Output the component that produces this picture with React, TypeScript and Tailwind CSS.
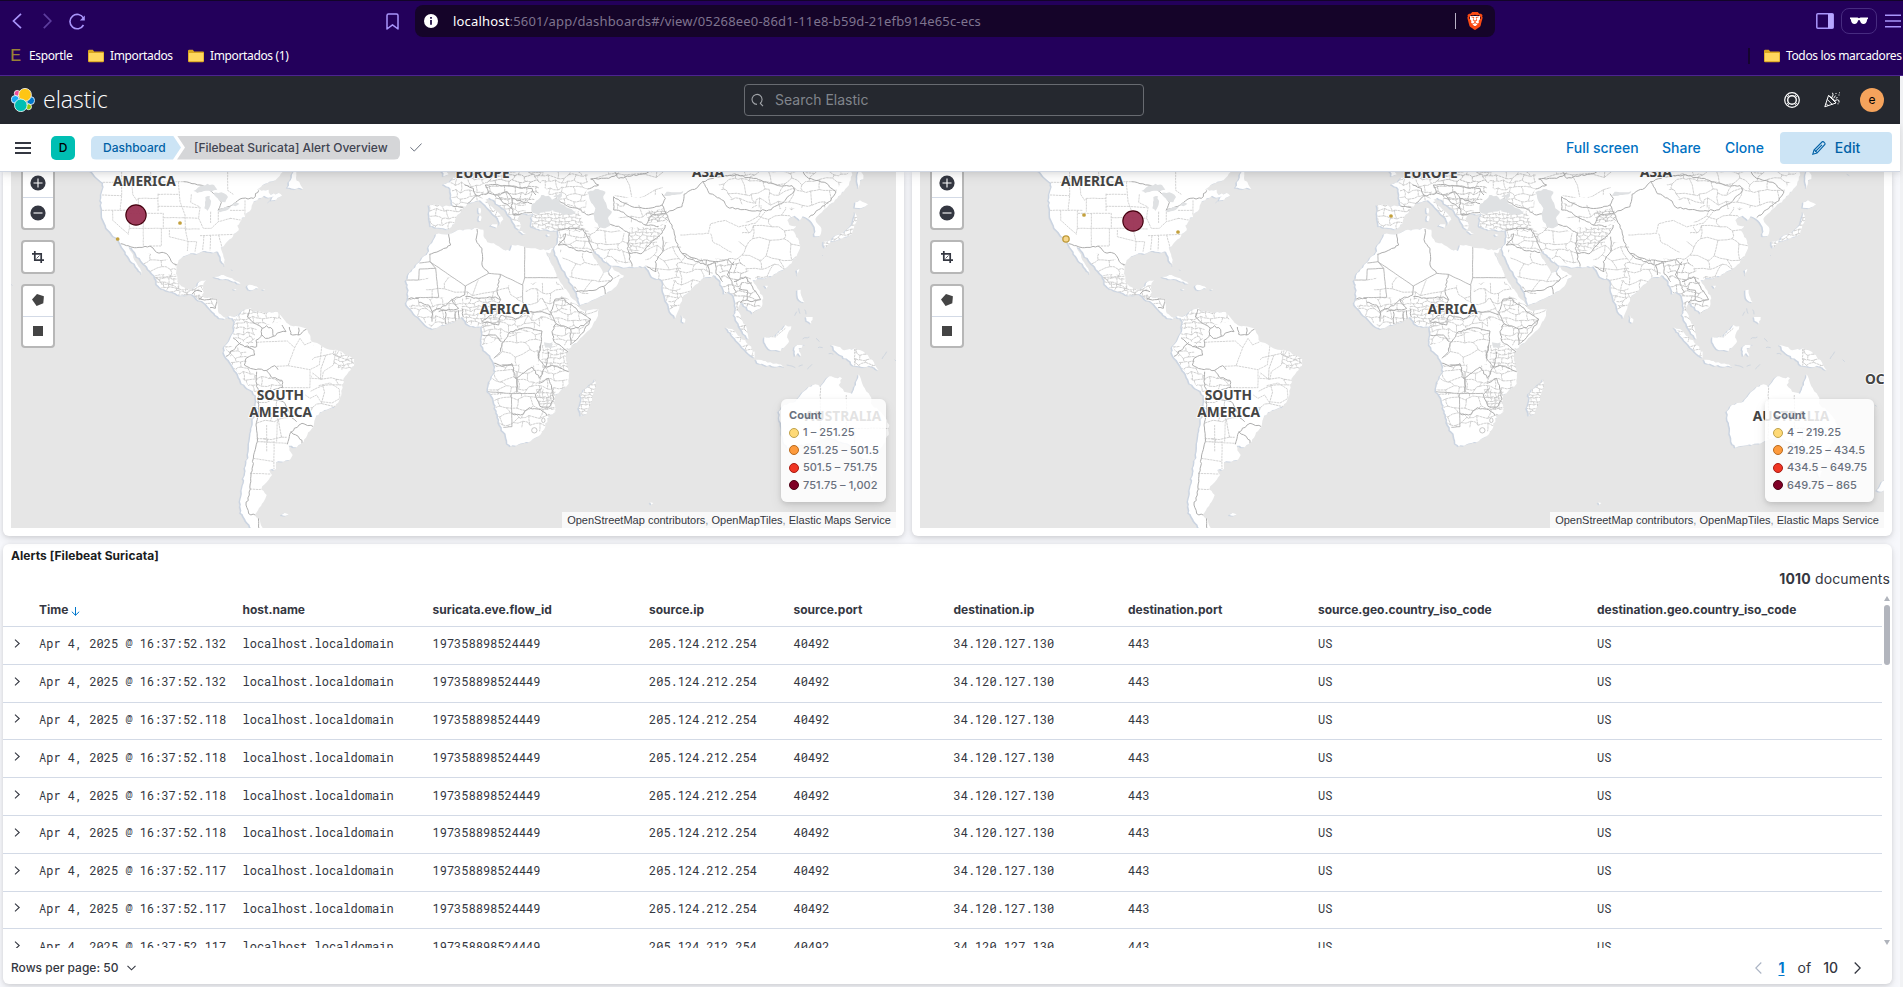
import React from "react";
import { SiBrave } from "react-icons/si";

type Pt = [number, number];

const pts = (s: string): Pt[] => s.trim().split(/\s+/).map((p) => p.split(",").map(Number) as Pt);

function rng(seed: number) {
  let a = seed;
  return () => {
    a = (a + 0x6d2b79f5) | 0;
    let t = Math.imul(a ^ (a >>> 15), 1 | a);
    t = (t + Math.imul(t ^ (t >>> 7), 61 | t)) ^ t;
    return ((t ^ (t >>> 14)) >>> 0) / 4294967296;
  };
}

/* Breaks a polyline into short wobbly steps so that it reads as a natural coast or border. */
function rough(s: string, amp: number, closed: boolean): string {
  const p = pts(s);
  const r = rng(p.length * 131 + Math.abs(Math.round(p[0][0] * 7 + p[0][1])));
  const out: string[] = [];
  const n = closed ? p.length : p.length - 1;
  for (let i = 0; i < n; i++) {
    const [x1, y1] = p[i];
    const [x2, y2] = p[(i + 1) % p.length];
    const len = Math.hypot(x2 - x1, y2 - y1);
    const k = Math.max(1, Math.round(len / 8));
    for (let j = 0; j < k; j++) {
      const w = j === 0 ? 0 : amp;
      const t = j / k;
      out.push(`${(x1 + (x2 - x1) * t + (r() - 0.5) * 2 * w).toFixed(1)},${(y1 + (y2 - y1) * t + (r() - 0.5) * 2 * w).toFixed(1)}`);
    }
  }
  if (!closed) out.push(p[p.length - 1].join(","));
  return "M" + out.join("L") + (closed ? "Z" : "");
}

/* Irregular honeycomb of small districts that covers the bounding box of an area. */
function mesh(area: string, size: number): string {
  const p = pts(area);
  const xs = p.map((q) => q[0]);
  const ys = p.map((q) => q[1]);
  const x0 = Math.min(...xs) - size;
  const y0 = Math.min(...ys) - size;
  const cols = Math.ceil((Math.max(...xs) - x0) / size) + 2;
  const rows = Math.ceil((Math.max(...ys) - y0) / size) + 2;
  const r = rng(cols * 97 + rows * 31 + size);
  const v: Pt[][] = [];
  for (let j = 0; j < rows; j++) {
    v.push([]);
    for (let i = 0; i < cols; i++) v[j].push([x0 + i * size + (r() - 0.5) * size * 0.8, y0 + j * size + (r() - 0.5) * size * 0.8]);
  }
  let d = "";
  const edge = (a: Pt, b: Pt) => {
    const mx = (a[0] + b[0]) / 2 + (r() - 0.5) * size * 0.35;
    const my = (a[1] + b[1]) / 2 + (r() - 0.5) * size * 0.35;
    d += `M${a[0].toFixed(1)},${a[1].toFixed(1)}L${mx.toFixed(1)},${my.toFixed(1)}L${b[0].toFixed(1)},${b[1].toFixed(1)}`;
  };
  for (let j = 0; j < rows; j++)
    for (let i = 0; i < cols; i++) {
      if (i + 1 < cols) edge(v[j][i], v[j][i + 1]);
      if (j + 1 < rows && (i + j) % 2 === 0) edge(v[j][i], v[j + 1][i]);
    }
  return d;
}

const WEST_LAND = [
  "266,14 290,38 310,54 311,66 306,82 304,100 303,120 306,148 313,172 326,196 340,214 354,222 362,238 372,254 384,274 392,288 404,296 414,312 426,328 420,310 408,292 400,278 394,262 386,246 396,250 408,268 424,288 436,300 448,316 464,332 470,346 470,358 486,372 510,380 534,390 556,392 576,388 590,402 606,408 620,420 632,434 646,450 658,460 674,462 686,456 698,460 704,470 716,448 702,456 690,452 676,458 662,448 654,438 650,402 634,398 612,398 606,390 612,378 610,358 618,346 598,350 592,364 578,372 560,372 544,364 532,350 528,326 530,300 536,286 550,274 572,265 596,265 616,258 640,263 654,260 662,276 668,294 676,304 674,284 666,260 662,248 676,236 698,216 716,196 712,182 724,166 736,148 754,132 758,116 776,100 792,92 806,98 822,92 806,112 846,92 836,84 812,90 806,74 790,76 770,74 788,60 808,50 832,40 856,14",
  "862,68 872,46 880,22 892,16 888,40 900,56 910,72 896,68 884,72",
  "705,470 720,446 736,432 752,430 758,442 776,438 800,444 832,440 846,456 860,474 880,484 906,487 922,494 930,510 936,530 958,538 976,550 1000,555 1026,560 1048,574 1063,582 1062,602 1046,620 1030,642 1028,668 1020,700 1006,726 980,734 960,742 946,760 940,786 922,810 906,836 890,847 866,842 868,856 878,870 870,884 850,890 828,892 828,912 808,915 816,930 800,952 784,972 800,990 790,1012 774,1036 764,1050 776,1060 782,1078 796,1094 758,1094 738,1068 722,1044 720,1010 728,962 738,902 746,860 750,820 758,780 765,732 768,692 750,674 725,656 710,622 690,592 674,570 672,548 690,522 702,500",
  "642,336 664,330 690,338 708,348 722,356 700,350 676,342 656,340",
  "742,362 756,360 776,370 760,374 746,374",
  "700,372 710,372 706,375",
  "788,373 796,373 792,375",
  "844,1050 854,1044 866,1048 852,1052",
];

const EAST_LAND = [
  "12,208 30,208 54,206 76,196 106,193 136,190 154,194 158,220 166,232 192,240 214,254 234,258 240,240 258,240 280,248 310,250 340,256 364,250 350,266 356,290 370,320 382,346 396,370 412,386 422,402 436,416 442,430 460,438 500,433 498,452 480,486 450,516 426,536 410,552 402,576 406,600 412,622 410,656 396,670 370,688 368,720 370,740 346,760 340,786 320,814 290,832 260,838 236,844 226,836 222,814 204,780 194,744 184,700 168,680 172,650 190,620 185,592 175,572 155,556 148,540 151,510 150,482 130,486 110,480 90,456 70,470 44,478 2,492 -20,480 -38,460 -58,440 -76,420 -72,400 -70,376 -78,346 -62,320 -48,300 -33,286 -13,264 -7,240 4,226",
  "-9,120 12,120 36,124 62,122 58,90 56,72 34,58 54,52 64,38 76,34 90,12 1262,12 1256,46 1240,72 1216,100 1186,126 1164,146 1150,162 1168,190 1164,212 1148,214 1148,186 1134,166 1112,154 1104,166 1088,152 1066,166 1072,180 1094,184 1080,196 1098,220 1104,250 1090,280 1060,310 1020,334 986,340 962,346 976,370 994,400 990,424 962,446 944,426 926,414 918,430 926,460 944,490 950,522 934,506 920,476 906,450 912,430 904,390 888,380 876,386 866,350 850,332 830,336 810,342 790,360 770,382 750,400 742,430 730,460 714,440 700,400 692,366 690,346 660,336 640,304 600,306 574,308 540,302 514,286 490,258 480,262 486,280 500,300 514,324 530,322 540,300 546,316 560,322 576,332 560,350 546,370 520,388 480,406 444,420 440,400 430,376 406,336 386,300 370,270 366,252 376,238 380,214 378,196 350,196 320,192 300,186 298,158 306,148 282,146 262,150 256,162 266,176 262,194 250,186 240,164 224,140 200,120 184,104 172,98 164,110 184,130 204,148 214,164 204,180 198,160 178,140 160,120 144,106 124,112 106,116 94,130 76,150 68,176 50,192 20,188 -4,184 -8,160",
  "490,642 492,664 480,700 464,746 446,752 440,730 448,706 446,686 470,664",
  "750,450 760,462 757,474 750,470",
  "1270,112 1284,106 1308,118 1286,130 1268,128",
  "1270,140 1275,160 1266,190 1260,208 1240,215 1214,226 1196,228 1210,212 1236,204 1250,190 1264,166",
  "1175,230 1196,226 1190,238 1178,248",
  "1282,12 1290,24 1294,42 1284,46 1280,70 1276,40",
  "1094,316 1102,312 1098,332",
  "998,362 1008,362 1004,370",
  "1096,376 1106,374 1108,392 1118,412 1108,410 1098,400",
  "1122,456 1142,456 1138,476 1124,468",
  "882,487 900,492 926,516 950,540 968,560 968,578 950,566 926,540 904,516",
  "972,584 1000,588 1040,598 1060,606 1020,604 976,594",
  "998,516 1030,515 1060,480 1078,484 1066,510 1071,530 1046,558 1010,552 1000,536",
  "1088,546 1096,540 1122,538 1100,550 1108,574 1098,564 1090,574",
  "1198,540 1224,546 1236,556 1268,550 1300,564 1322,586 1340,616 1310,602 1290,606 1264,602 1250,586 1224,570 1212,560",
  "1040,740 1056,720 1090,710 1106,690 1130,666 1150,658 1164,666 1180,646 1192,634 1230,640 1220,660 1236,680 1260,686 1272,660 1280,628 1294,664 1314,692 1320,720 1346,740 1372,780 1370,810 1346,850 1326,886 1290,880 1266,850 1254,840 1226,830 1190,816 1140,836 1090,842 1066,848 1054,830 1050,790",
  "1308,918 1326,918 1320,938",
  "1490,976 1506,950 1520,940 1520,970 1504,980",
  "140,128 146,130 145,146 140,144",
  "176,182 196,178 194,188",
  "142,152 147,152 146,168 141,168",
  "262,198 282,204 274,208",
  "344,208 356,210 348,214",
  "30,20 44,14 50,28 34,34",
  "655,1012 664,1014 658,1019",
];

const EAST_SPECKS = [
  "1100,430 1104,446", "1118,434 1122,448", "1094,440 1088,452", "1064,600 1090,608", "1100,604 1112,600", "1126,612 1140,598", "1152,520 1162,530",
  "1190,566 1204,568", "1158,548 1172,548", "1112,522 1132,516", "1170,270 1172,272", "1350,582 1364,560", "1388,584 1394,590", "1484,720 1490,724", "1400,28 1408,32",
];

const WEST_WATER = [
  "580,78 600,64 622,56 642,60 652,74 634,80 612,78 592,84",
  "616,96 630,94 632,118 622,138 613,130",
  "640,84 664,82 684,96 676,112 658,108 648,96",
  "652,138 676,126 694,124 684,134 660,142",
  "692,122 708,112 718,116 706,124",
];
const EAST_WATER = [
  "300,116 318,104 328,90 350,92 360,104 384,98 382,110 410,130 432,140 416,150 390,148 362,136 340,140 320,148 300,142",
  "364,96 390,84 386,98",
  "466,82 490,72 520,80 514,100 526,130 540,140 528,160 534,182 520,190 500,186 490,170 484,146 490,130 474,106",
  "696,92 704,80 740,82 754,78 752,84 720,90",
  "336,532 362,532 362,548 340,548",
  "342,262 350,264 374,318 368,316",
];

const WEST_BORDERS = [
  "550,50 576,56 600,60 626,70 650,92 664,112 654,136 690,124 720,102 760,100 776,76", "362,236 410,248 450,243 470,262 486,262 500,266 514,290 533,300",
  "576,388 590,376 606,380", "606,398 596,402 620,404 650,402 646,430 630,428", "750,432 742,456 770,478 786,490 783,514 768,526 770,545 734,545 700,520",
  "786,490 800,482 818,494 820,514 796,520 786,510", "820,514 840,502 858,500 846,480", "868,486 872,508 896,510 920,492", "896,488 896,510",
  "722,532 700,556 678,574", "734,545 762,556 764,570 738,580 733,600 760,612 800,616 824,602 834,614", "770,620 768,650 776,690", "800,616 812,634 846,646 848,668 820,674",
  "776,690 776,750 768,780 772,830 760,880 752,940 748,990 738,1020 746,1046 776,1052 778,1092", "862,838 872,802 906,775 940,785", "872,800 906,826 906,836", "776,690 800,700 850,710 872,750 890,770",
];
const WEST_STRAIGHT = [
  "308,52 550,50", "306,90 365,92", "305,136 405,136", "338,136 338,166 386,208", "388,136 388,190 384,208", "388,190 560,190", "365,20 365,92 360,136", "474,86 474,140", "415,100 474,100",
  "415,100 415,140", "390,145 490,145 490,190", "430,145 430,243", "484,190 484,243 450,243", "508,195 508,215 560,228", "474,88 536,88", "474,124 540,124", "490,158 548,158", "535,50 540,110 555,150 556,192 564,232 562,258",
  "556,192 600,192", "562,230 590,230 585,260", "612,212 608,256", "632,210 630,256", "656,210 666,248", "600,212 700,208", "574,88 572,112 600,126 596,160 610,190 634,190 655,170 692,160", "632,140 632,175",
  "655,140 655,170", "690,136 735,136", "690,160 722,165", "735,106 735,152", "452,20 452,50", "683,20 683,76 700,88", "396,52 398,88 410,106 415,100", "540,124 596,128", "548,158 596,160", "770,532 800,530 862,528 884,548 864,602 830,604",
  "864,602 930,614 930,668 848,668", "884,548 900,520 914,540 936,530", "966,542 958,600 930,614", "1008,556 1000,600 970,620 966,642 932,640", "750,925 812,927", "750,972 790,974", "822,828 822,912", "772,830 860,835", "760,880 822,890",
  "956,662 990,654 1018,672 1020,700 996,714 962,710 950,690 930,700 916,690", "800,780 800,860", "832,760 830,830",
];
const EAST_BORDERS = [
  "50,207 56,240 30,254 -8,268", "135,192 132,224 150,250 150,300 170,325", "205,328 195,380 206,404", "272,410 290,440 250,462 206,452 200,480 150,470", "100,363 98,390 60,404 26,430 0,440", "90,430 94,456", "100,395 140,400 190,396 206,404 180,450 150,470",
  "235,500 280,488 330,498 326,540 320,580 340,606 322,640 300,606 250,640 240,596 210,604 185,594", "255,640 255,680", "235,500 210,536 206,560 186,580", "320,655 350,640 366,700 350,726 324,724 310,688 330,668", "240,746 266,750 292,728 326,734 345,752",
  "370,402 390,400 420,420 442,442 476,462 456,482 416,492 372,476 356,440 370,402", "372,476 360,500 366,530 408,560", "416,492 416,540", "476,462 456,500 420,536", "340,606 360,600 410,620", "350,560 340,606", "290,440 330,440 356,450", "320,580 326,540",
  "150,510 190,510 206,530", "375,196 426,190 452,192 466,216 476,240 486,262", "378,240 400,238 432,256 480,262", "400,205 396,224 378,240", "432,380 486,376 516,364 542,340 530,322", "516,366 520,388", "530,176 560,184 592,205 586,250 600,305",
  "545,135 560,136 600,160 640,180 680,184", "590,265 630,265 660,230 690,205 700,180", "545,135 545,95 600,125 650,130 690,120 702,145 720,180 732,230 750,265 800,285 850,290 890,285 906,300", "700,145 750,125 756,88 796,68 812,50 832,86 876,108 886,126 960,138 1010,135 1050,116 1088,76 1080,62 1040,62 980,44 910,30 850,36 812,50",
  "1110,16 1130,40 1182,54 1212,80 1196,108 1170,124 1130,158", "700,145 660,150 640,180", "750,265 766,280 822,300 824,285", "850,290 826,300 832,330", "850,292 852,326 872,350", "906,290 886,330 900,350 912,384", "906,350 940,336 962,366 986,404 960,410 945,405 925,412", "920,370 946,376 945,405",
  "692,215 692,260 670,290 672,320 646,306", "545,16 560,40 660,20", "690,86 700,100 690,120", "466,72 500,60 476,42 530,40 560,24", "448,140 470,150 488,146", "370,100 400,120 450,136", "60,122 96,130", "98,60 124,70 132,92 106,116", "132,92 170,84 196,90 226,80 240,100 270,110 300,116", "196,90 210,110 240,130 244,150 270,146",
  "170,84 160,60 200,60 240,64 300,70 312,90", "240,100 240,130", "245,150 300,142", "60,404 80,430 20,440", "-40,412 -10,420 0,440 0,470", "40,440 42,478", "70,440 72,468", "80,436 82,462", "-76,400 -40,400",
];
const EAST_STRAIGHT = [
  "278,245 278,338 380,338", "278,338 272,358 272,410", "170,325 205,328 272,360", "-6,290 100,363 170,325", "-6,290 -6,268", "11,310 20,397 -50,398", "11,310 -6,290 -38,294", "-80,345 -40,345 -38,312 11,310", "168,680 238,686 310,685", "238,686 240,785 214,787", "210,600 240,600", "255,620 255,680",
];
const EAST_THIN = ["1165,660 1165,780", "1243,690 1243,790 1372,790", "1268,552 1268,602", "1165,780 1165,826", "1268,790 1268,850", "745,210 830,205 836,176 880,166 920,186 972,174 1000,140", "1000,515 1030,516 1060,490", "836,206 842,230 900,262"];

type Area = { a: string; s: number; dark?: boolean };
const WEST_MESH: Area[] = [
  { a: "400,262 470,266 530,300 530,340 620,350 650,440 590,410 470,350", s: 26 },
  { a: "466,330 530,330 540,380 600,370 600,400 500,384 466,360", s: 12 },
  { a: "705,430 860,438 840,470 790,480 770,480 760,540 700,520 700,480", s: 15 },
  { a: "676,540 740,550 740,600 776,640 770,690 700,610", s: 17 },
  { a: "770,620 846,640 846,670 776,690", s: 22 },
  { a: "768,700 850,710 870,770 860,830 770,830", s: 36 },
  { a: "1000,556 1066,575 1060,610 1030,620 1000,600", s: 14 },
  { a: "940,540 1070,560 1030,720 930,740", s: 44 },
];
const EAST_MESH: Area[] = [
  { a: "-10,116 100,126 60,194 -10,190", s: 20 },
  { a: "55,20 160,20 150,110 60,126", s: 19 },
  { a: "160,16 330,16 320,90 300,110 240,120 160,90", s: 17, dark: true },
  { a: "300,16 470,16 460,140 360,100", s: 18 },
  { a: "160,100 290,100 260,200 160,140", s: 17 },
  { a: "300,144 440,138 460,200 380,196 300,190", s: 10 },
  { a: "380,196 470,196 486,262 380,240", s: 19 },
  { a: "450,190 540,180 600,220 590,306 500,280", s: 26 },
  { a: "380,250 500,270 570,330 440,400", s: 42 },
  { a: "592,190 700,180 670,240 590,264", s: 11 },
  { a: "640,140 700,130 710,170 650,175", s: 9, dark: true },
  { a: "640,220 750,240 740,460 640,330", s: 30 },
  { a: "740,270 860,290 830,350 700,450", s: 27 },
  { a: "850,280 930,280 960,350 990,430 940,520 880,390", s: 20, dark: true },
  { a: "960,120 1100,130 1110,300 980,350 900,280 940,180", s: 38 },
  { a: "840,20 1250,20 1180,130 960,130 880,100", s: 30 },
  { a: "470,16 700,16 690,90 560,100", s: 62 },
  { a: "550,110 690,125 640,180 560,160", s: 40 },
  { a: "-80,400 0,400 90,400 90,480 0,490 -60,440", s: 19 },
  { a: "90,400 200,400 200,470 150,490 90,470", s: 12 },
  { a: "200,440 340,440 320,490 150,540 150,480", s: 19 },
  { a: "280,356 380,350 420,420 360,480 290,440", s: 28 },
  { a: "-40,340 110,340 270,370 270,410 0,400", s: 44 },
  { a: "370,400 500,430 420,540 360,540", s: 21 },
  { a: "330,540 412,550 410,620 330,610", s: 13 },
  { a: "206,500 330,500 320,600 190,600", s: 32 },
  { a: "170,600 330,600 410,620 400,680 170,690", s: 22 },
  { a: "180,690 370,680 370,740 340,800 200,780", s: 24 },
  { a: "310,670 370,680 370,740 320,726", s: 12 },
  { a: "440,640 500,640 480,760 430,760", s: 10 },
  { a: "1268,550 1340,560 1340,610 1268,602", s: 16 },
  { a: "1170,140 1280,130 1270,230 1170,250", s: 13 },
  { a: "880,480 970,550 960,580", s: 20 },
];

function Hemisphere({ id, land, water, borders, straight, thin, areas, specks }: { id: string; land: string[]; water: string[]; borders: string[]; straight: string[]; thin: string[]; areas: Area[]; specks: string[] }) {
  const landPath = land.map((l) => rough(l, 2.6, true)).join("");
  const straightPath = straight.map((l) => rough(l, 0.4, false)).join("");
  return (
    <g>
      <defs>
        <clipPath id={`${id}-land`}><path d={landPath} /></clipPath>
        {areas.map((m, i) => (
          <clipPath key={i} id={`${id}-a${i}`}><path d={rough(m.a, 3, true)} /></clipPath>
        ))}
      </defs>
      <path d={landPath} fill="#cbd4e1" transform="translate(-4 2)" stroke="#cbd4e1" strokeWidth="1" />
      <path d={landPath} fill="#ffffff" />
      <path d={specks.map((l) => rough(l, 2, false)).join("")} fill="none" stroke="#cfd6df" strokeWidth="3" />
      <g clipPath={`url(#${id}-land)`} fill="none">
        {areas.map((m, i) => (
          <g key={i} clipPath={`url(#${id}-a${i})`}>
            <path d={mesh(m.a, m.s)} stroke={m.dark ? "#b8b8b8" : "#c3c3c3"} strokeWidth={m.dark ? 2.5 : 2.3} strokeDasharray="8 1.5" />
          </g>
        ))}
        <path d={thin.map((l) => rough(l, 1, false)).join("")} stroke="#c6c6c6" strokeWidth="2.4" strokeDasharray="7 2" />
        <path d={straightPath} stroke={id.startsWith("w") ? "#cdcdcd" : "#b0b0b0"} strokeWidth="2.6" strokeDasharray={id.startsWith("w") ? "7 2" : undefined} />
        <path d={borders.map((l) => rough(l, 2.4, false)).join("")} stroke="#adadad" strokeWidth="3" />
        <path d={water.map((l) => rough(l, 2.4, true)).join("")} fill="#dfe1e3" />
      </g>
    </g>
  );
}

const LABELS: { t: string; x: number; y: number; start?: boolean }[] = [
  { t: "AMERICA", x: 433, y: 64 },
  { t: "SOUTH", x: 841, y: 705 },
  { t: "AMERICA", x: 842, y: 756 },
  { t: "EUROPE", x: 1448, y: 38 },
  { t: "ASIA", x: 2124, y: 37 },
  { t: "AFRICA", x: 1514, y: 447 },
  { t: "AUSTRALIA", x: 2529, y: 768 },
  { t: "OCEANIA", x: 2751, y: 657, start: true },
];

type Dot = { x: number; y: number; kind: "big" | "mid" | "small" };

function WorldMap({ id, left, width, dots, oceania }: { id: string; left: number; width: number; dots: Dot[]; oceania: boolean }) {
  return (
    <svg className="block h-full w-full bg-[#e6e6e6]" viewBox={`${left} 21 ${width} 1068`} preserveAspectRatio="none">
      <Hemisphere id={`w${id}`} land={WEST_LAND} water={WEST_WATER} borders={WEST_BORDERS} straight={WEST_STRAIGHT} thin={[]} areas={WEST_MESH} specks={["34,358 37,362", "694,314 697,318"]} />
      <g transform="translate(1296 0)">
        <Hemisphere id={`e${id}`} land={EAST_LAND} water={EAST_WATER} borders={EAST_BORDERS} straight={EAST_STRAIGHT} thin={EAST_THIN} areas={EAST_MESH} specks={EAST_SPECKS} />
        <circle cx="307" cy="796" r="8" fill="none" stroke="#b9b9b9" strokeWidth="2.4" />
        <ellipse cx="334" cy="766" rx="5" ry="7" fill="none" stroke="#b9b9b9" strokeWidth="2.4" />
      </g>
      {LABELS.filter((l) => oceania || !l.start).map((l) => (
        <text key={l.t + l.y} x={l.x} y={l.y} textAnchor={l.start ? "start" : "middle"} fontFamily='"Noto Sans", sans-serif' fontWeight="700" fontSize="41.2" fill="#444" stroke="#fff" strokeOpacity="0.85" strokeWidth="6" strokeLinejoin="round" paintOrder="stroke">
          {l.t}
        </text>
      ))}
      {dots.map((d, i) =>
        d.kind === "big" ? (
          <circle key={i} cx={d.x} cy={d.y} r="30.5" fill="#9a3253" fillOpacity="0.95" stroke="#45000f" strokeWidth="3.4" />
        ) : d.kind === "mid" ? (
          <circle key={i} cx={d.x} cy={d.y} r="9.5" fill="#f7d78c" stroke="#be9a3a" strokeWidth="4" />
        ) : (
          <circle key={i} cx={d.x} cy={d.y} r="5.6" fill="#c3a03c" />
        ),
      )}
    </svg>
  );
}

function MapControls() {
  const box = "w-[34px] rounded-[4px] border-2 border-[#b7b7b7] bg-white bg-clip-padding";
  return (
    <div className="absolute -top-[8px] left-[10px] flex flex-col">
      <div className={`${box} h-[66px]`}>
        <div className="flex h-[32px] items-end justify-center border-b border-[#d3dae6] pb-[6px]">
          <svg width="16" height="16" viewBox="0 0 16 16"><circle cx="8" cy="8" r="7.6" fill="#343741" /><path d="M8 3.5v9M3.5 8h9" stroke="#fff" strokeWidth="1.1" /></svg>
        </div>
        <div className="flex h-[30px] items-center justify-center">
          <svg width="16" height="16" viewBox="0 0 16 16"><circle cx="8" cy="8" r="7.6" fill="#343741" /><path d="M3.5 8h9" stroke="#fff" strokeWidth="1.1" /></svg>
        </div>
      </div>
      <div className={`${box} mt-[10px] flex h-[34px] items-center justify-center`}>
        <svg width="12" height="12" viewBox="0 0 12 12" fill="none" stroke="#343741" strokeWidth="1.7"><path d="M2.8 0v9.2H12M0 2.8h9.2V12" /><path d="M4.5 7.5l3-3" strokeWidth=".8" /></svg>
      </div>
      <div className={`${box} mt-[10px] h-[64px]`}>
        <div className="flex h-[31px] items-center justify-center border-b border-[#d3dae6] pb-[2px]">
          <svg width="12" height="12" viewBox="0 0 12 12"><path d="M5 0l6.9 2.200-.6 7L4.600 12 0 5.600z" fill="#444" /></svg>
        </div>
        <div className="flex h-[28px] items-center justify-center pb-[1px]"><div className="size-[10px] bg-[#444]" /></div>
      </div>
    </div>
  );
}

function Legend({ rows, wide }: { rows: string[]; wide: boolean }) {
  const fills = ["bg-[#fed976] border-[#bfa24b]", "bg-[#fd9a3c] border-[#b96a1c]", "bg-[#f03523] border-[#a81a12]", "bg-[#800026] border-[#4c0014]"];
  return (
    <div className={`absolute right-[10px] bottom-[26px] h-[103px] rounded-[6px] bg-white/85 pt-[8px] pl-[8px] font-["Inter",sans-serif] text-[#69707d] shadow-[0_2px_5px_rgba(0,0,0,0.12),0_6px_14px_rgba(0,0,0,0.07)] ${wide ? "w-[109px]" : "w-[105px]"}`}>
      <div className="h-[17px] text-[11px] leading-[17px] font-bold">Count</div>
      {rows.map((r, i) => (
        <div key={r} className="flex h-[17.500px] items-center gap-[4px]">
          <span className={`size-[10px] rounded-full border ${fills[i]}`} />
          <span className="text-[11px] leading-[17px] font-medium tracking-[0.07px] whitespace-nowrap">{r}</span>
        </div>
      ))}
    </div>
  );
}

function MapPanel({ id, wide, left, dots, rows }: { id: string; wide: boolean; left: number; dots: Dot[]; rows: string[] }) {
  return (
    <section className={`h-[364px] rounded-b-[6px] bg-white px-[8px] pb-[8px] shadow-[0_1px_4px_rgba(0,0,0,0.10),0_4px_10px_rgba(0,0,0,0.09)] ${wide ? "w-[980px]" : "w-[901px]"}`}>
      <div className="relative h-full overflow-hidden">
        <WorldMap id={id} left={left} width={wide ? 2892 : 2655} dots={dots} oceania={wide} />
        <MapControls />
        <Legend rows={rows} wide={wide} />
        <div className='absolute right-0 bottom-0 flex h-[16px] w-[334px] items-center justify-center bg-white/75 font-["Liberation_Sans",Arial,sans-serif] text-[11px] leading-[16px] whitespace-pre text-[#343741]'>
          OpenStreetMap contributors<span className="text-[#8a8f98]">, </span>OpenMapTiles<span className="text-[#8a8f98]">, </span>Elastic Maps Service
        </div>
      </div>
    </section>
  );
}

function Folder() {
  return (
    <svg width="16" height="14" viewBox="0 0 16 14" className="shrink-0">
      <path d="M0 2Q0 .8 1.200.800h3.600l1.400 1.600H15q1 0 1 1V12q0 1.200-1.200 1.200H1.200Q0 13.200 0 12z" fill="#d9a520" />
      <path d="M.8 4h14.600v8.200H.8z" fill="#ffd75e" />
    </svg>
  );
}

function BrowserChrome() {
  const bm = 'font-["Noto_Sans",sans-serif] text-[12px] leading-[16px] tracking-[-0.36px] text-white whitespace-nowrap';
  return (
    <header className="h-[76px] shrink-0 border-t border-b border-t-[#120428] border-b-[#4c2490] bg-[#23005b]">
      <div className="flex h-[40px] items-center">
        <svg className="ml-[12px]" width="10" height="16" viewBox="0 0 10 16" fill="none" stroke="#a995fb" strokeWidth="1.7"><path d="M9 .8L1.500 8 9 15.200" /></svg>
        <svg className="ml-[21px]" width="9" height="16" viewBox="0 0 9 16" fill="none" stroke="#5d3d9e" strokeWidth="1.7"><path d="M.8.8L7.800 8l-7 7.200" /></svg>
        <svg className="ml-[17px]" width="17" height="17" viewBox="0 0 17 17" fill="none" stroke="#a995fb" strokeWidth="1.6"><path d="M14.500 5.200A7.200 7.200 0 1 0 14.500 12" /><path d="M15.800 2.500v5h-5z" fill="#a995fb" stroke="none" /></svg>
        <svg className="ml-[300px]" width="13" height="17" viewBox="0 0 13 17" fill="none" stroke="#a995fb" strokeWidth="1.5" strokeLinejoin="round"><path d="M1 2.500Q1 1 2.500 1h8Q12 1 12 2.500V16l-5.500-4.200L1 16z" /></svg>
        <div className="ml-[16px] flex h-[32px] w-[1080px] items-center rounded-[8px] bg-[#150429]">
          <svg className="ml-[9px]" width="14" height="14" viewBox="0 0 14 14"><circle cx="7" cy="7" r="7" fill="#fff" /><path d="M7 6v4.800M7 3v1.800" stroke="#23104a" strokeWidth="1.8" /></svg>
          <span className='ml-[15px] w-[1002px] font-["Noto_Sans",sans-serif] text-[13px] leading-[18px] tracking-[0.175px] whitespace-nowrap text-[#7f748f]'><span className="text-white">localhost</span>:5601/app/dashboards#/view/05268ee0-86d1-11e8-b59d-21efb914e65c-ecs</span>
          <span className="h-[16px] w-px bg-[#b9b2c6]" />
          <span className="relative ml-[10px] flex size-[18px] items-center justify-center">
            <span className="absolute inset-[4px] bg-white" />
            <SiBrave className="relative size-[18px] text-[#fb4a13]" />
          </span>
        </div>
        <svg className="ml-[321px]" width="18" height="16" viewBox="0 0 18 16"><rect x=".8" y=".8" width="16.400" height="14.400" rx="1" fill="none" stroke="#a995fb" strokeWidth="1.500" /><rect x="12" y="1" width="5.200" height="14" fill="#b7a5ff" /></svg>
        <div className="ml-[7px] flex h-[26px] w-[36px] items-center justify-center rounded-[8px] border border-[#472b80]">
          <svg width="18" height="8" viewBox="0 0 18 8" fill="#fff"><path d="M0 .5h7.500l1.500.8 1.500-.8H18v1.400l-.8.3C16.800 5.500 15.500 7 13.500 7s-3.200-1.400-3.600-3.800H8.100C7.700 5.600 6.500 7 4.500 7S1.200 5.500.8 2.200L0 1.900z" /></svg>
        </div>
        <svg className="ml-[8px] shrink-0" width="16" height="14" viewBox="0 0 16 14" stroke="#a995fb" strokeWidth="1.400"><path d="M0 1.200h16M0 7h16M0 12.800h16" /></svg>
      </div>
      <div className="flex h-[30px] items-center">
        <span className='ml-[10px] w-[19px] font-["Liberation_Mono",monospace] text-[19px] leading-[18px] text-[#9a8136]'>E</span>
        <span className={`${bm} w-[59px]`}>Esportle</span>
        <Folder />
        <span className={`${bm} ml-[6px] w-[78px]`}>Importados</span>
        <Folder />
        <span className={`${bm} ml-[6px] w-[80px]`}>Importados (1)</span>
        <span className="ml-auto h-[16px] w-[2px] bg-[#15042f]" />
        <span className="ml-[14px] flex"><Folder /></span>
        <span className={`${bm} ml-[6px] w-[117px]`}>Todos los marcadores</span>
      </div>
    </header>
  );
}

function ElasticHeader() {
  return (
    <div className="flex h-[48px] shrink-0 items-center bg-[#25282f]">
      <svg className="ml-[11px]" width="24" height="24" viewBox="0 0 24 24">
        <g stroke="#fff" strokeWidth=".8">
          <circle cx="6.200" cy="5.300" r="2.900" fill="#f04e98" />
          <circle cx="4.200" cy="11.400" r="3.900" fill="#1ba9f5" />
          <circle cx="19.600" cy="12.600" r="4" fill="#0077cc" />
          <circle cx="17.600" cy="18.800" r="2.900" fill="#93c90e" />
          <circle cx="14" cy="6.800" r="6.400" fill="#fec514" />
          <circle cx="9.800" cy="17.300" r="6.300" fill="#00bfb3" />
        </g>
      </svg>
      <span className='ml-[8px] w-[70px] pb-[2px] font-["Open_Sans",sans-serif] text-[23px] leading-[28px] font-light text-white'>elastic</span>
      <div className="ml-[631px] flex h-[32px] w-[400px] items-center rounded-[4px] border border-[#686b71]">
        <svg className="ml-[6px]" width="13" height="14" viewBox="0 0 13 14" fill="none" stroke="#a0a3a8" strokeWidth="1.100"><path d="M9.200 10.300A5 5 0 1 0 6 11.400M9 10l3 3.200" /></svg>
        <span className='ml-[11px] pb-[1px] font-["Inter",sans-serif] text-[14px] leading-[20px] text-[#81858c]'>Search Elastic</span>
      </div>
      <div className="ml-auto flex items-center">
        <svg width="16" height="16" viewBox="0 0 16 16" fill="none" stroke="#fff" strokeWidth="1.200"><circle cx="8" cy="8" r="7.300" /><circle cx="8" cy="8" r="4.300" strokeWidth="1.400" /><path d="M3.700 2.300l1.700 2.200M2.300 3.700l2.200 1.700M12.300 2.300l-1.700 2.200M13.700 3.700l-2.200 1.700M3.700 13.700l1.700-2.200M2.300 12.300l2.200-1.700M12.300 13.700l-1.700-2.200M13.700 12.300l-2.200-1.700" strokeWidth=".9" /></svg>
        <svg className="ml-[24px]" width="16" height="16" viewBox="0 0 16 16" fill="none" stroke="#fff" strokeWidth="1"><path d="M4.500 3.500L.8 14.800 12 11z" /><path d="M3.300 7.500l5 5M2 11.500l2.500 2.500M4.500 3.500Q9.500 5.500 12 11" /><path d="M8.500.8Q10 3 8 5M11 8.500q2.500-1.500 4 0v2M9.800 6l1.700-2.400M11.800 6.200l1.700-.7" /><path d="M11.500 1.500h1M14.500 3h1M15 .8h.8M13.500 11.800h1" /></svg>
        <span className='mr-[16px] ml-[20px] flex size-[24px] items-center justify-center rounded-full bg-[#f5a35c] font-["Inter",sans-serif] text-[12px] text-black'>e</span>
      </div>
    </div>
  );
}

function NavBar() {
  const link = "text-[14px] leading-[20px] font-medium text-[#0071c2] whitespace-nowrap";
  return (
    <nav className='relative z-10 flex h-[48px] shrink-0 items-center border-b border-[#cfd6e2] bg-white font-["Inter",sans-serif] shadow-[0_2px_5px_rgba(0,0,0,0.08),0_5px_12px_rgba(0,0,0,0.06)]'>
      <svg className="ml-[15px]" width="16" height="12" viewBox="0 0 16 12" fill="#343741"><path d="M0 0h16v2H0zM0 5h16v2H0zM0 10h16v2H0z" /></svg>
      <span className="ml-[20px] flex size-[24px] items-center justify-center rounded-[5px] bg-[#00bfb3] text-[12px] font-medium text-black">D</span>
      <div className="ml-[16px] flex h-[24px] items-center text-[12px] leading-[24px] font-medium">
        <span className="h-[24px] w-[90px] rounded-l-[5px] bg-[#cce4f5] pl-[12px] text-[#0061a6] [clip-path:polygon(0_0,82px_0,100%_50%,82px_100%,0_100%)]">Dashboard</span>
        <span className="-ml-[4px] h-[24px] w-[223px] rounded-r-[6px] bg-[#d5d6d8] pl-[17px] whitespace-nowrap text-[#404350] [clip-path:polygon(0_0,100%_0,100%_100%,0_100%,8px_50%)]">[Filebeat Suricata] Alert Overview</span>
      </div>
      <svg className="ml-[10px]" width="12" height="9" viewBox="0 0 12 9" fill="none" stroke="#69707d" strokeWidth="1"><path d="M.4 4.300l3.900 3.800L11.600.5" /></svg>
      <div className="mr-[8px] ml-auto flex items-center">
        <span className={`${link} w-[96px]`}>Full screen</span>
        <span className={`${link} w-[63px]`}>Share</span>
        <span className={`${link} w-[55px]`}>Clone</span>
        <button className="flex h-[32px] w-[112px] items-center justify-center gap-[9px] rounded-[4px] bg-[#cce4f5] text-[14px] font-medium text-[#0061a6]">
          <svg width="14" height="14" viewBox="0 0 14 14" fill="none" stroke="#0061a6" strokeWidth="1.100"><path d="M10.200.8q1-.5 2 .6 1.200 1 .7 2L5 12 .8 13.200 2 9z" /><path d="M2 9q1.500 0 1.500 1.500Q5 10.500 5 12M4 9.800l6-6" /></svg>
          Edit
        </button>
      </div>
    </nav>
  );
}

const COLUMNS = [
  { name: "Time", w: "w-[203.500px]" },
  { name: "host.name", w: "w-[190px]" },
  { name: "suricata.eve.flow_id", w: "w-[216.500px]" },
  { name: "source.ip", w: "w-[144.500px]" },
  { name: "source.port", w: "w-[160px]" },
  { name: "destination.ip", w: "w-[174.500px]" },
  { name: "destination.port", w: "w-[190px]" },
  { name: "source.geo.country_iso_code", w: "w-[279px]" },
  { name: "destination.geo.country_iso_code", w: "w-[280px]" },
];

const TIMES = ["132", "132", "118", "118", "118", "118", "117", "117", "117"];

function AlertsPanel() {
  return (
    <section className='mt-[8px] ml-[3px] flex h-[440px] w-[1889px] flex-col rounded-[6px] bg-white font-["Inter",sans-serif] text-[#343741] shadow-[0_1px_4px_rgba(0,0,0,0.10),0_4px_10px_rgba(0,0,0,0.09)]'>
      <h2 className="h-[24px] pl-[8px] text-[12px] leading-[24px] font-bold tracking-[0.05px] text-[#1a1c21]">Alerts [Filebeat Suricata]</h2>
      <div className="h-[24px] pr-[2px] text-right text-[14px] leading-[22px] tracking-[0.14px]"><b>1010</b> documents</div>
      <div className="flex h-[356px] overflow-hidden">
        <div className="w-[1879px] shrink-0">
          <div className="flex h-[35px] items-center border-b border-[#d3dae6] pt-[2px] pl-[36px] text-[12px] font-bold">
            {COLUMNS.map((c, i) => (
              <div key={c.name} className={`flex shrink-0 items-center gap-[3px] ${c.w}`}>
                {c.name}
                {i === 0 && <svg className="mt-[2px]" width="9" height="9" viewBox="0 0 9 9" fill="none" stroke="#0077cc" strokeWidth="1"><path d="M4.500 0v8.300M.8 4.700l3.700 3.600 3.700-3.600" /></svg>}
              </div>
            ))}
          </div>
          {TIMES.map((t, i) => (
            <div key={i} className='flex h-[37.800px] items-center border-b border-[#d3dae6] pb-[4px] font-["Roboto_Mono","Liberation_Mono",monospace] text-[12px] leading-[18px]'>
              <svg className="mr-[18.500px] ml-[11px] shrink-0" width="6.500" height="9" viewBox="0 0 6.500 9" fill="none" stroke="#343741" strokeWidth="1.100"><path d="M1 .6l4.200 3.900L1 8.400" /></svg>
              {[`Apr 4, 2025 @ 16:37:52.${t}`, "localhost.localdomain", "197358898524449", "205.124.212.254", "40492", "34.120.127.130", "443", "US", "US"].map((v, k) => (
                <div key={k} className={`shrink-0 whitespace-nowrap ${COLUMNS[k].w}`}>{v}</div>
              ))}
            </div>
          ))}
        </div>
        <div className="flex w-[10px] flex-col items-center pt-[4px] pb-[3px]">
          <svg width="6" height="5" viewBox="0 0 6 5" fill="#b0b4bc"><path d="M3 0l3 5H0z" /></svg>
          <div className="mt-[4px] h-[60px] w-[6px] rounded-full bg-[#b2b5bd]" />
          <svg className="mt-auto" width="6" height="5" viewBox="0 0 6 5" fill="#b0b4bc"><path d="M3 5l3-5H0z" /></svg>
        </div>
      </div>
      <div className="flex h-[36px] items-center pt-[3px] pl-[8px]">
        <span className="text-[12px] font-medium">Rows per page: 50</span>
        <svg className="ml-[9px]" width="9" height="6" viewBox="0 0 9 6" fill="none" stroke="#343741" strokeWidth="1.100"><path d="M.5.800l4 4 4-4" /></svg>
        <div className="mr-[31px] ml-auto flex items-center text-[14px]">
          <svg width="7" height="12" viewBox="0 0 7 12" fill="none" stroke="#abb4c4" strokeWidth="1.100"><path d="M6.300.5L.8 6l5.500 5.500" /></svg>
          <span className="ml-[17px] font-bold text-[#0077cc] underline underline-offset-2">1</span>
          <span className="ml-[13px]">of</span>
          <span className="ml-[12px] font-medium">10</span>
          <svg className="ml-[16px]" width="7" height="12" viewBox="0 0 7 12" fill="none" stroke="#343741" strokeWidth="1.300"><path d="M.7.500L6.200 6 .7 11.500" /></svg>
        </div>
      </div>
    </section>
  );
}

export default function App() {
  return (
    <div className="flex h-[987px] w-[1903px] flex-col overflow-hidden bg-[#f1f2f4]">
      <BrowserChrome />
      <div className="flex w-[1900px] grow flex-col bg-[#f7f8fc]">
        <ElasticHeader />
        <NavBar />
        <main>
          <div className="flex gap-[8px] pl-[3px]">
            <MapPanel
              id="a"
              wide={false}
              left={33}
              dots={[{ x: 408, y: 150, kind: "big" }, { x: 353, y: 222, kind: "small" }, { x: 540, y: 174, kind: "small" }]}
              rows={["1 – 251.25", "251.25 – 501.5", "501.5 – 751.75", "751.75 – 1,002"]}
            />
            <MapPanel
              id="b"
              wide
              left={-84}
              dots={[{ x: 555, y: 168, kind: "big" }, { x: 354, y: 222, kind: "mid" }, { x: 408, y: 150, kind: "small" }, { x: 690, y: 201, kind: "small" }, { x: 1329, y: 153, kind: "small" }]}
              rows={["4 – 219.25", "219.25 – 434.5", "434.5 – 649.75", "649.75 – 865"]}
            />
          </div>
          <AlertsPanel />
        </main>
      </div>
    </div>
  );
}
